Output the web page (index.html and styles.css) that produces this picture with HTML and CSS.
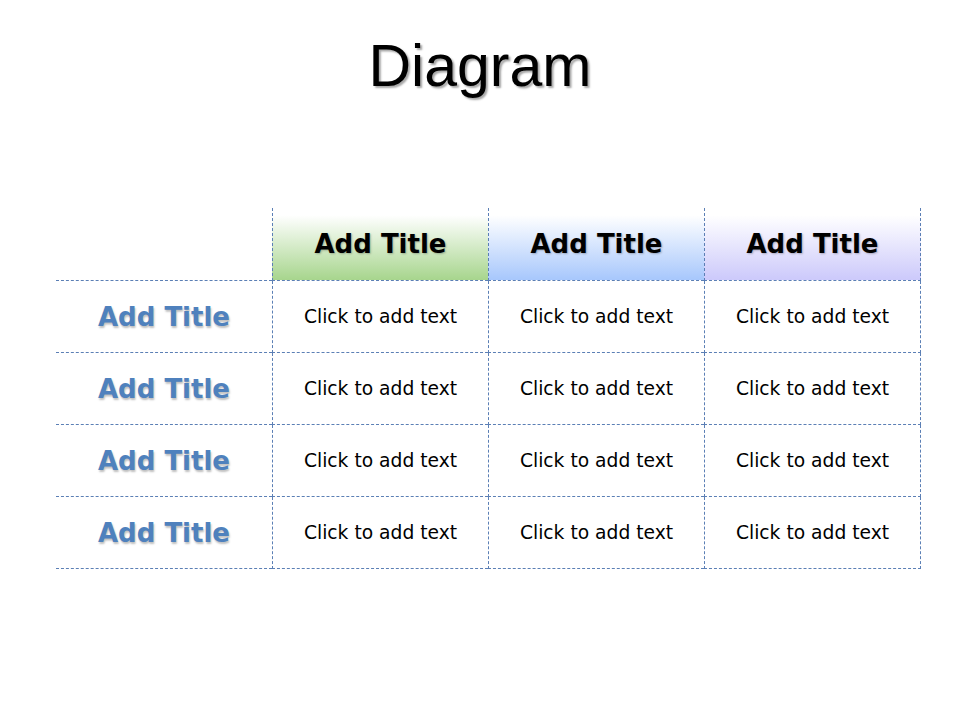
FILE: index.html
```html
<!DOCTYPE html>
<html>
<head>
<meta charset="utf-8">
<link rel="stylesheet" href="styles.css">
</head>
<body>
<h1 class="title">Diagram</h1>
<div class="table">
  <div class="cell corner"></div>
  <div class="cell head green">Add Title</div>
  <div class="cell head blue">Add Title</div>
  <div class="cell head purple last">Add Title</div>

  <div class="cell rowtitle">Add Title</div>
  <div class="cell body">Click to add text</div>
  <div class="cell body">Click to add text</div>
  <div class="cell body last">Click to add text</div>

  <div class="cell rowtitle">Add Title</div>
  <div class="cell body">Click to add text</div>
  <div class="cell body">Click to add text</div>
  <div class="cell body last">Click to add text</div>

  <div class="cell rowtitle">Add Title</div>
  <div class="cell body">Click to add text</div>
  <div class="cell body">Click to add text</div>
  <div class="cell body last">Click to add text</div>

  <div class="cell rowtitle">Add Title</div>
  <div class="cell body">Click to add text</div>
  <div class="cell body">Click to add text</div>
  <div class="cell body last">Click to add text</div>
</div>
</body>
</html>
```
FILE: styles.css
```css
html, body {
  margin: 0;
  padding: 0;
  background: #ffffff;
}
body {
  width: 960px;
  height: 720px;
  overflow: hidden;
}
.title {
  margin: 0;
  padding-top: 31px;
  height: 70px;
  text-align: center;
  font-family: "Liberation Sans", Arial, sans-serif;
  font-weight: normal;
  font-size: 59px;
  line-height: 70px;
  color: #000000;
  text-shadow: 2px 2px 2px rgba(0, 0, 0, 0.35);
}
.table {
  margin: 107px 0 0 56px;
  display: grid;
  grid-template-columns: 216px 216px 216px 217px;
  grid-template-rows: 73px;
  grid-auto-rows: 72px;
}
.cell {
  box-sizing: border-box;
  border-bottom: 1px dashed #5b7fb5;
  display: flex;
  align-items: center;
  justify-content: center;
}
.head, .body {
  border-left: 1px dashed #5b7fb5;
}
.last {
  border-right: 1px dashed #5b7fb5;
}
.head {
  font-family: "DejaVu Sans", Verdana, sans-serif;
  font-weight: bold;
  font-size: 26px;
  color: #000000;
  text-shadow: 1px 1px 2px rgba(0, 0, 0, 0.25);
}
.green {
  background: linear-gradient(to bottom, #ffffff 10%, #a7d58d 100%);
}
.blue {
  background: linear-gradient(to bottom, #ffffff 10%, #a7c7fc 100%);
}
.purple {
  background: linear-gradient(to bottom, #ffffff 10%, #ccc9fb 100%);
}
.rowtitle {
  font-family: "DejaVu Sans", Verdana, sans-serif;
  font-weight: bold;
  font-size: 26px;
  color: #4f81bd;
  text-shadow: 1px 2px 2px rgba(0, 0, 0, 0.25);
}
.body {
  font-family: "DejaVu Sans", Verdana, sans-serif;
  font-size: 18.7px;
  color: #000000;
}
```
